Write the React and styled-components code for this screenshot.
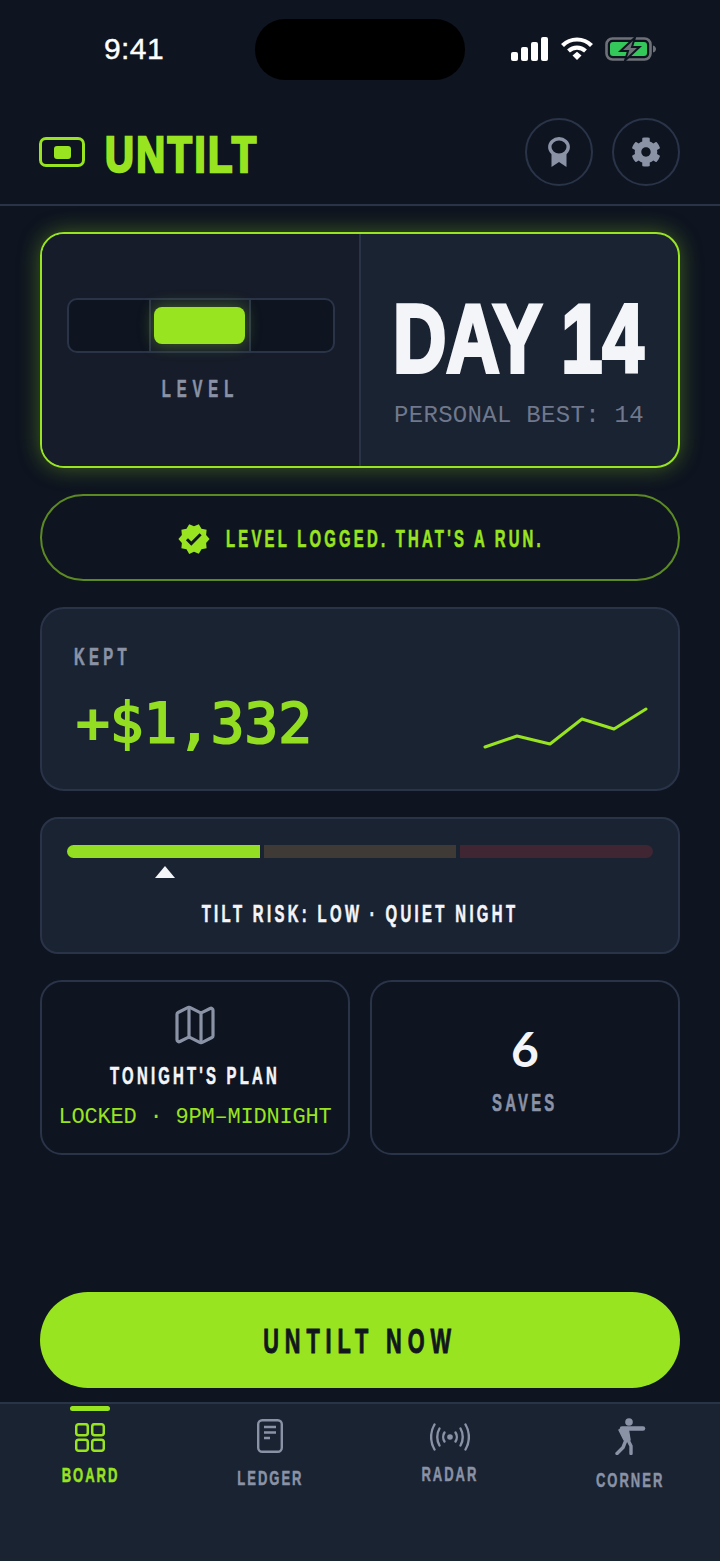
import React from "react";
import styled, { createGlobalStyle } from "styled-components";
import { Map as MapIcon } from "lucide-react";
import { FaCog } from "react-icons/fa";
import { MdVerified } from "react-icons/md";

const LIME = "#99e421";
const BG = "#0e1420";
const CARD = "#1a2332";
const LINE = "#2a3448";
const GRAY = "#8a92a6";
const WHITE = "#f4f5f8";
const DISPLAY = '"Liberation Sans", sans-serif';
const MONO = '"Liberation Mono", monospace';
// no condensed face is installed, so the caps get squeezed horizontally
const SQUEEZE = 0.62;

const GlobalStyle = createGlobalStyle`
  html, body {
    margin: 0;
    padding: 0;
    background: ${BG};
  }
  * {
    box-sizing: border-box;
  }
`;

const Page = styled.div`
  width: 720px;
  height: 1561px;
  display: flex;
  flex-direction: column;
  background: ${BG};
  overflow: hidden;
  font-family: ${DISPLAY};
`;

const StatusBar = styled.div`
  height: 100px;
  flex-shrink: 0;
  padding-top: 19px;
  display: grid;
  grid-template-columns: 255px 210px 1fr;
  align-items: start;
`;

const Time = styled.div`
  padding-left: 104px;
  margin-top: 13px;
  font-size: 30px;
  line-height: 34px;
  letter-spacing: 0.4px;
  color: #fff;
  -webkit-text-stroke: 0.4px #fff;
`;

const Island = styled.div`
  height: 61px;
  background: #000;
  border-radius: 30px;
`;

const StatusIcons = styled.div`
  display: flex;
  align-items: center;
  gap: 12px;
  padding: 18px 0 0 46px;
`;

const Header = styled.header`
  height: 106px;
  flex-shrink: 0;
  display: flex;
  align-items: center;
  padding: 0 40px 0 39px;
  border-bottom: 2px solid ${LINE};
`;

const LogoMark = styled.div`
  width: 46px;
  height: 30px;
  border: 3px solid ${LIME};
  border-radius: 7px;
  display: flex;
  align-items: center;
  justify-content: center;
`;

const LogoDot = styled.div`
  width: 17px;
  height: 13px;
  background: ${LIME};
  border-radius: 3px;
`;

const Logo = styled.div`
  margin: 5px 0 0 20px;
  font-size: 50px;
  line-height: 1;
  font-weight: 700;
  color: ${LIME};
  -webkit-text-stroke: 2.5px ${LIME};
  letter-spacing: 3px;
  transform: scaleX(0.8);
  transform-origin: left center;
`;

const HeaderActions = styled.div`
  margin-left: auto;
  display: flex;
  gap: 19px;
`;

const RoundButton = styled.button`
  width: 68px;
  height: 68px;
  padding: 0;
  background: transparent;
  border: 2px solid ${LINE};
  border-radius: 50%;
  display: flex;
  align-items: center;
  justify-content: center;
  color: ${GRAY};
`;

const Main = styled.main`
  flex: 1;
  display: flex;
  flex-direction: column;
  gap: 26px;
  padding: 26px 40px 0;
`;

const Hero = styled.section`
  height: 236px;
  flex-shrink: 0;
  display: grid;
  grid-template-columns: 319px minmax(0, 1fr);
  border: 2px solid ${LIME};
  border-radius: 24px;
  overflow: hidden;
  box-shadow: 0 0 22px rgba(153, 228, 33, 0.36);
  background: ${CARD};
`;

const HeroLeft = styled.div`
  background: #161c29;
  border-right: 2px solid ${LINE};
  padding: 64px 24px 0;
  display: flex;
  flex-direction: column;
  align-items: center;
`;

const Track = styled.div`
  width: 268px;
  height: 55px;
  flex-shrink: 0;
  border: 2px solid ${LINE};
  border-radius: 10px;
  background: ${BG};
  display: grid;
  grid-template-columns: 80px 102px 1fr;
`;

const TrackMiddle = styled.div`
  border-left: 2px solid ${LINE};
  border-right: 2px solid ${LINE};
  background: #161d29;
  display: flex;
  align-items: center;
  justify-content: center;
`;

const Bubble = styled.div`
  width: 91px;
  height: 37px;
  background: ${LIME};
  border-radius: 8px;
  box-shadow: 0 0 16px rgba(153, 228, 33, 0.35);
`;

const Label = styled.div`
  font-size: 24px;
  line-height: 1;
  font-weight: 700;
  letter-spacing: ${(p) => p.$spacing ?? 5.2}px;
  color: ${(p) => p.$color || GRAY};
  -webkit-text-stroke: 0.6px ${(p) => p.$color || GRAY};
  white-space: nowrap;
  transform: scaleX(${SQUEEZE});
  transform-origin: ${(p) => p.$origin || "center"};
`;

const LevelLabel = styled(Label)`
  margin-top: 24px;
`;

const HeroRight = styled.div`
  min-width: 0;
  display: flex;
  flex-direction: column;
  align-items: flex-end;
  padding: 60px 34px 0 0;
`;

const DayText = styled.div`
  font-size: 96px;
  line-height: 90px;
  font-weight: 700;
  color: ${WHITE};
  -webkit-text-stroke: 4px ${WHITE};
  white-space: nowrap;
  transform: scaleX(0.77);
  transform-origin: right center;
`;

const Best = styled.div`
  margin-top: 20px;
  font-family: ${MONO};
  font-size: 24px;
  line-height: 1;
  letter-spacing: 0.3px;
  color: #6f788c;
  white-space: nowrap;
`;

const Banner = styled.div`
  height: 87px;
  flex-shrink: 0;
  border: 2px solid #5c8a22;
  border-radius: 44px;
  padding-top: 2px;
  display: flex;
  align-items: center;
  justify-content: center;
  gap: 15px;
  color: ${LIME};
`;

const BannerText = styled(Label)`
  margin-right: -196px;
`;

const Kept = styled.section`
  height: 184px;
  flex-shrink: 0;
  position: relative;
  background: ${CARD};
  border: 2px solid ${LINE};
  border-radius: 24px;
  padding: 36px 32px 0;
`;

const Amount = styled.div`
  margin: 26px 0 0 2px;
  font-family: "DejaVu Sans Mono", monospace;
  font-size: 56px;
  line-height: 1;
  color: #93dd22;
  -webkit-text-stroke: 2px #93dd22;
`;

const Spark = styled.svg`
  position: absolute;
  left: 441px;
  top: 97px;
`;

const Risk = styled.section`
  height: 137px;
  flex-shrink: 0;
  background: ${CARD};
  border: 2px solid ${LINE};
  border-radius: 18px;
  padding: 26px 25px 0;
`;

const Meter = styled.div`
  display: flex;
  gap: 4px;
  height: 13px;
  border-radius: 7px;
  overflow: hidden;
`;

const Segment = styled.div`
  flex: 1;
  background: ${(p) => p.$color};
`;

const Pointer = styled.div`
  width: 0;
  height: 0;
  margin: 8px 0 0 88px;
  border-left: 10px solid transparent;
  border-right: 10px solid transparent;
  border-bottom: 12px solid ${WHITE};
`;

const RiskText = styled(Label)`
  margin-top: 24px;
  text-align: center;
`;

const Duo = styled.div`
  display: grid;
  grid-template-columns: 1fr 1fr;
  gap: 20px;
`;

const SmallCard = styled.section`
  height: 175px;
  border: 2px solid ${LINE};
  border-radius: 22px;
  display: flex;
  flex-direction: column;
  align-items: center;
  padding-top: ${(p) => p.$top}px;
`;

const PlanTitle = styled(Label)`
  margin-top: 15px;
`;

const PlanTime = styled.div`
  margin-top: 19px;
  font-family: ${MONO};
  font-size: 22px;
  line-height: 1;
  letter-spacing: -0.2px;
  color: ${LIME};
  white-space: nowrap;
`;

const SavesCount = styled.div`
  font-family: Lato, sans-serif;
  font-size: 48px;
  line-height: 48px;
  font-weight: 700;
  color: ${WHITE};
`;

const SavesLabel = styled(Label)`
  margin-top: 18px;
`;

const CtaWrap = styled.div`
  padding: 0 40px 14px;
`;

const Cta = styled.button`
  width: 100%;
  height: 96px;
  padding: 2px 0 0;
  border: none;
  border-radius: 48px;
  background: ${LIME};
  display: flex;
  align-items: center;
  justify-content: center;
  font-family: ${DISPLAY};
`;

const CtaText = styled.span`
  font-size: 35px;
  font-weight: 700;
  letter-spacing: 9.5px;
  color: #12161d;
  -webkit-text-stroke: 1px #12161d;
  transform: scaleX(${SQUEEZE});
`;

const Nav = styled.nav`
  height: 159px;
  flex-shrink: 0;
  background: ${CARD};
  border-top: 2px solid ${LINE};
  display: grid;
  grid-template-columns: repeat(4, 1fr);
`;

const Tab = styled.div`
  position: relative;
  display: flex;
  flex-direction: column;
  align-items: center;
  padding-top: ${(p) => p.$top}px;
  color: ${(p) => (p.$active ? LIME : GRAY)};
`;

const ActiveBar = styled.div`
  position: absolute;
  top: 2px;
  left: 70px;
  width: 40px;
  height: 5px;
  border-radius: 3px;
  background: ${LIME};
`;

const TabLabel = styled.div`
  margin-top: ${(p) => p.$gap}px;
  font-size: 21px;
  line-height: 1;
  font-weight: 700;
  letter-spacing: 3.2px;
  -webkit-text-stroke: 0.5px currentColor;
  white-space: nowrap;
  transform: scaleX(${SQUEEZE});
`;

const SignalIcon = () => (
  <svg width="38" height="24" viewBox="0 0 38 24" fill="#fff">
    <rect x="0" y="15" width="7" height="9" rx="2" />
    <rect x="10" y="10" width="7" height="14" rx="2" />
    <rect x="20" y="5" width="7" height="19" rx="2" />
    <rect x="30" y="0" width="7" height="24" rx="2" />
  </svg>
);

const WifiIcon = () => (
  <svg width="32" height="24" viewBox="0 0 32 24" fill="none" stroke="#fff" strokeWidth="4.2">
    <path d="M1.5 8.5C9.5 .5 22.5 .5 30.5 8.5" />
    <path d="M7.5 14C12.5 9.5 19.5 9.5 24.5 14" />
    <path d="M11.5 18.4L16 14.8L20.5 18.4L16 23Z" fill="#fff" stroke="none" />
  </svg>
);

const BatteryIcon = () => (
  <svg width="52" height="24" viewBox="0 0 52 24">
    <rect x="1.5" y="1.5" width="44" height="21" rx="6" fill="none" stroke="#6e7278" strokeWidth="2.6" />
    <rect x="5" y="5" width="37" height="14" rx="3" fill="#34c759" />
    <path d="M48 8.5c2 .5 3 2 3 3.5s-1 3-3 3.5z" fill="#6e7278" />
    <path d="M30 0.5L15.5 14h7.5l-3 9.5L34.5 10h-7.5z" fill="#6e7278" stroke={BG} strokeWidth="2" />
  </svg>
);

const AwardIcon = () => (
  <svg width="24" height="30" viewBox="0 0 24 30" fill="none">
    <path d="M4.5 16V30L12 25L19.5 30V16Z" fill="currentColor" />
    <ellipse cx="12" cy="10" rx="9.2" ry="8.2" stroke="currentColor" strokeWidth="3.4" fill={BG} />
  </svg>
);

const BoardIcon = () => (
  <svg width="30" height="29" viewBox="0 0 30 29" fill="none" stroke="currentColor" strokeWidth="2.5">
    <rect x="1.2" y="1.2" width="11.6" height="11" rx="2.5" />
    <rect x="17.2" y="1.2" width="11.6" height="11" rx="2.5" />
    <rect x="1.2" y="16.8" width="11.6" height="11" rx="2.5" />
    <rect x="17.2" y="16.8" width="11.6" height="11" rx="2.5" />
  </svg>
);

const LedgerIcon = () => (
  <svg width="26" height="34" viewBox="0 0 26 34" fill="none" stroke="currentColor" strokeWidth="2.4">
    <rect x="1.2" y="1.2" width="23.6" height="31.6" rx="4" />
    <path d="M7 8h12M7 13.5h12M7 19h6" />
  </svg>
);

const RadarIcon = () => (
  <svg width="40" height="28" viewBox="0 0 40 28" fill="none" stroke="currentColor" strokeWidth="2.4" strokeLinecap="round">
    <circle cx="20" cy="14" r="2.8" fill="currentColor" stroke="none" />
    <path d="M14.5 9.5C12.8 12 12.8 16 14.5 18.5M25.5 9.5C27.2 12 27.2 16 25.5 18.5" />
    <path d="M9.5 5.5C6.5 10.5 6.5 17.5 9.5 22.5M30.5 5.5C33.5 10.5 33.5 17.5 30.5 22.5" />
    <path d="M4.5 1.5C0 9 0 19 4.5 26.5M35.5 1.5C40 9 40 19 35.5 26.5" />
  </svg>
);

const CornerIcon = () => (
  <svg width="32" height="37" viewBox="0 0 32 37" fill="none" stroke="currentColor" strokeLinecap="round" strokeLinejoin="round">
    <circle cx="15" cy="4" r="3.8" fill="currentColor" stroke="none" />
    <path d="M8 10.5H29" strokeWidth="4.5" />
    <path d="M5 12L14 9.5L16 22H10Z" fill="currentColor" stroke="currentColor" strokeWidth="1.5" />
    <path d="M12 22L9 29.5L3 35.5" strokeWidth="3.4" />
    <path d="M14 22L17 28L17 35.5" strokeWidth="3.4" />
  </svg>
);

const Sparkline = () => (
  <Spark width="170" height="48" viewBox="0 0 170 48" fill="none" stroke={LIME} strokeWidth="3" strokeLinecap="round" strokeLinejoin="round">
    <polyline points="2,41 34,30 67,38 99,13 131,23 163,3" />
  </Spark>
);

const App = () => {
  return (
    <>
      <GlobalStyle />
      <Page>
        <StatusBar>
          <Time>9:41</Time>
          <Island />
          <StatusIcons>
            <SignalIcon />
            <WifiIcon />
            <BatteryIcon />
          </StatusIcons>
        </StatusBar>

        <Header>
          <LogoMark>
            <LogoDot />
          </LogoMark>
          <Logo>UNTILT</Logo>
          <HeaderActions>
            <RoundButton>
              <AwardIcon />
            </RoundButton>
            <RoundButton>
              <FaCog size={30} />
            </RoundButton>
          </HeaderActions>
        </Header>

        <Main>
          <Hero>
            <HeroLeft>
              <Track>
                <div />
                <TrackMiddle>
                  <Bubble />
                </TrackMiddle>
                <div />
              </Track>
              <LevelLabel $spacing={9.5}>LEVEL</LevelLabel>
            </HeroLeft>
            <HeroRight>
              <DayText>DAY 14</DayText>
              <Best>PERSONAL BEST: 14</Best>
            </HeroRight>
          </Hero>

          <Banner>
            <MdVerified size={34} />
            <BannerText $color={LIME} $origin="left center">
              LEVEL LOGGED. THAT'S A RUN.
            </BannerText>
          </Banner>

          <Kept>
            <Label $spacing={7} $origin="left center">KEPT</Label>
            <Amount>+$1,332</Amount>
            <Sparkline />
          </Kept>

          <Risk>
            <Meter>
              <Segment $color="#93dd22" />
              <Segment $color="#403a36" />
              <Segment $color="#402633" />
            </Meter>
            <Pointer />
            <RiskText $color={WHITE} $spacing={5.4}>TILT RISK: LOW · QUIET NIGHT</RiskText>
          </Risk>

          <Duo>
            <SmallCard $top={19}>
              <MapIcon size={48} color={GRAY} strokeWidth={1.6} />
              <PlanTitle $color={WHITE}>TONIGHT'S PLAN</PlanTitle>
              <PlanTime>LOCKED · 9PM–MIDNIGHT</PlanTime>
            </SmallCard>
            <SmallCard $top={43}>
              <SavesCount>6</SavesCount>
              <SavesLabel>SAVES</SavesLabel>
            </SmallCard>
          </Duo>
        </Main>

        <CtaWrap>
          <Cta>
            <CtaText>UNTILT NOW</CtaText>
          </Cta>
        </CtaWrap>

        <Nav>
          <Tab $active $top={19}>
            <ActiveBar />
            <BoardIcon />
            <TabLabel $gap={12}>BOARD</TabLabel>
          </Tab>
          <Tab $top={15}>
            <LedgerIcon />
            <TabLabel $gap={14}>LEDGER</TabLabel>
          </Tab>
          <Tab $top={19}>
            <RadarIcon />
            <TabLabel $gap={12}>RADAR</TabLabel>
          </Tab>
          <Tab $top={14}>
            <CornerIcon />
            <TabLabel $gap={14}>CORNER</TabLabel>
          </Tab>
        </Nav>
      </Page>
    </>
  );
};

export default App;
